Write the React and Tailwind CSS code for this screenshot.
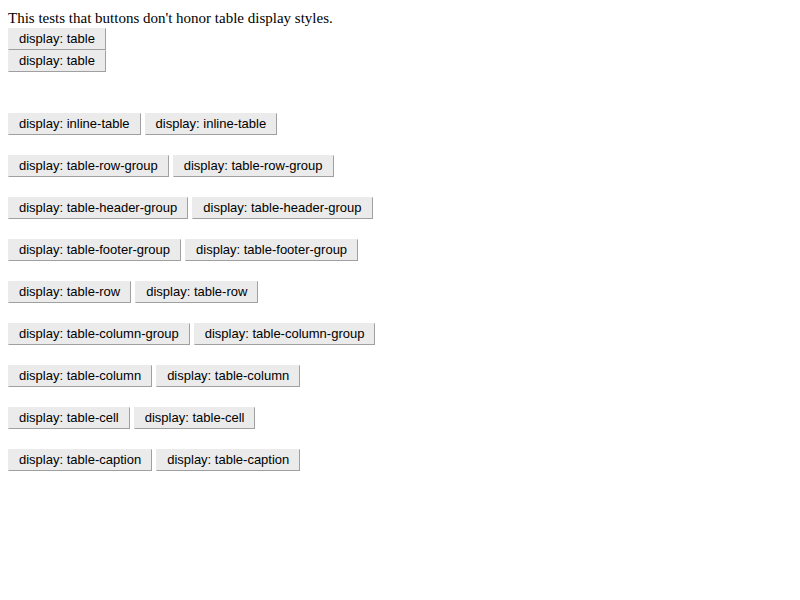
const rows = [
  'inline-table',
  'table-row-group',
  'table-header-group',
  'table-footer-group',
  'table-row',
  'table-column-group',
  'table-column',
  'table-cell',
  'table-caption',
];

const Btn = ({ children, className = '' }) => (
  <button
    className={`h-[22px] px-[10px] bg-[#ebebeb] border border-t-[#ebebeb] border-l-[#ebebeb] border-r-[#a0a0a0] border-b-[#a0a0a0] text-[13px] leading-[20px] text-black font-['Liberation_Sans',Arial,sans-serif] whitespace-nowrap ${className}`}
  >
    {children}
  </button>
);

export default function App() {
  return (
    <div className="p-2 font-['Liberation_Serif','Times_New_Roman',serif] text-[15px] leading-[18px] text-black bg-white min-h-[600px]">
      <p className="pt-[1px] h-[18px]">This tests that buttons don't honor table display styles.</p>
      <div className="mt-[2px] flex flex-col items-start">
        <Btn>display: table</Btn>
        <Btn>display: table</Btn>
      </div>
      <div className="mt-[41px] flex flex-col gap-[20px]">
        {rows.map((r) => (
          <div key={r} className="flex gap-[4px]">
            <Btn>display: {r}</Btn>
            <Btn>display: {r}</Btn>
          </div>
        ))}
      </div>
    </div>
  );
}
